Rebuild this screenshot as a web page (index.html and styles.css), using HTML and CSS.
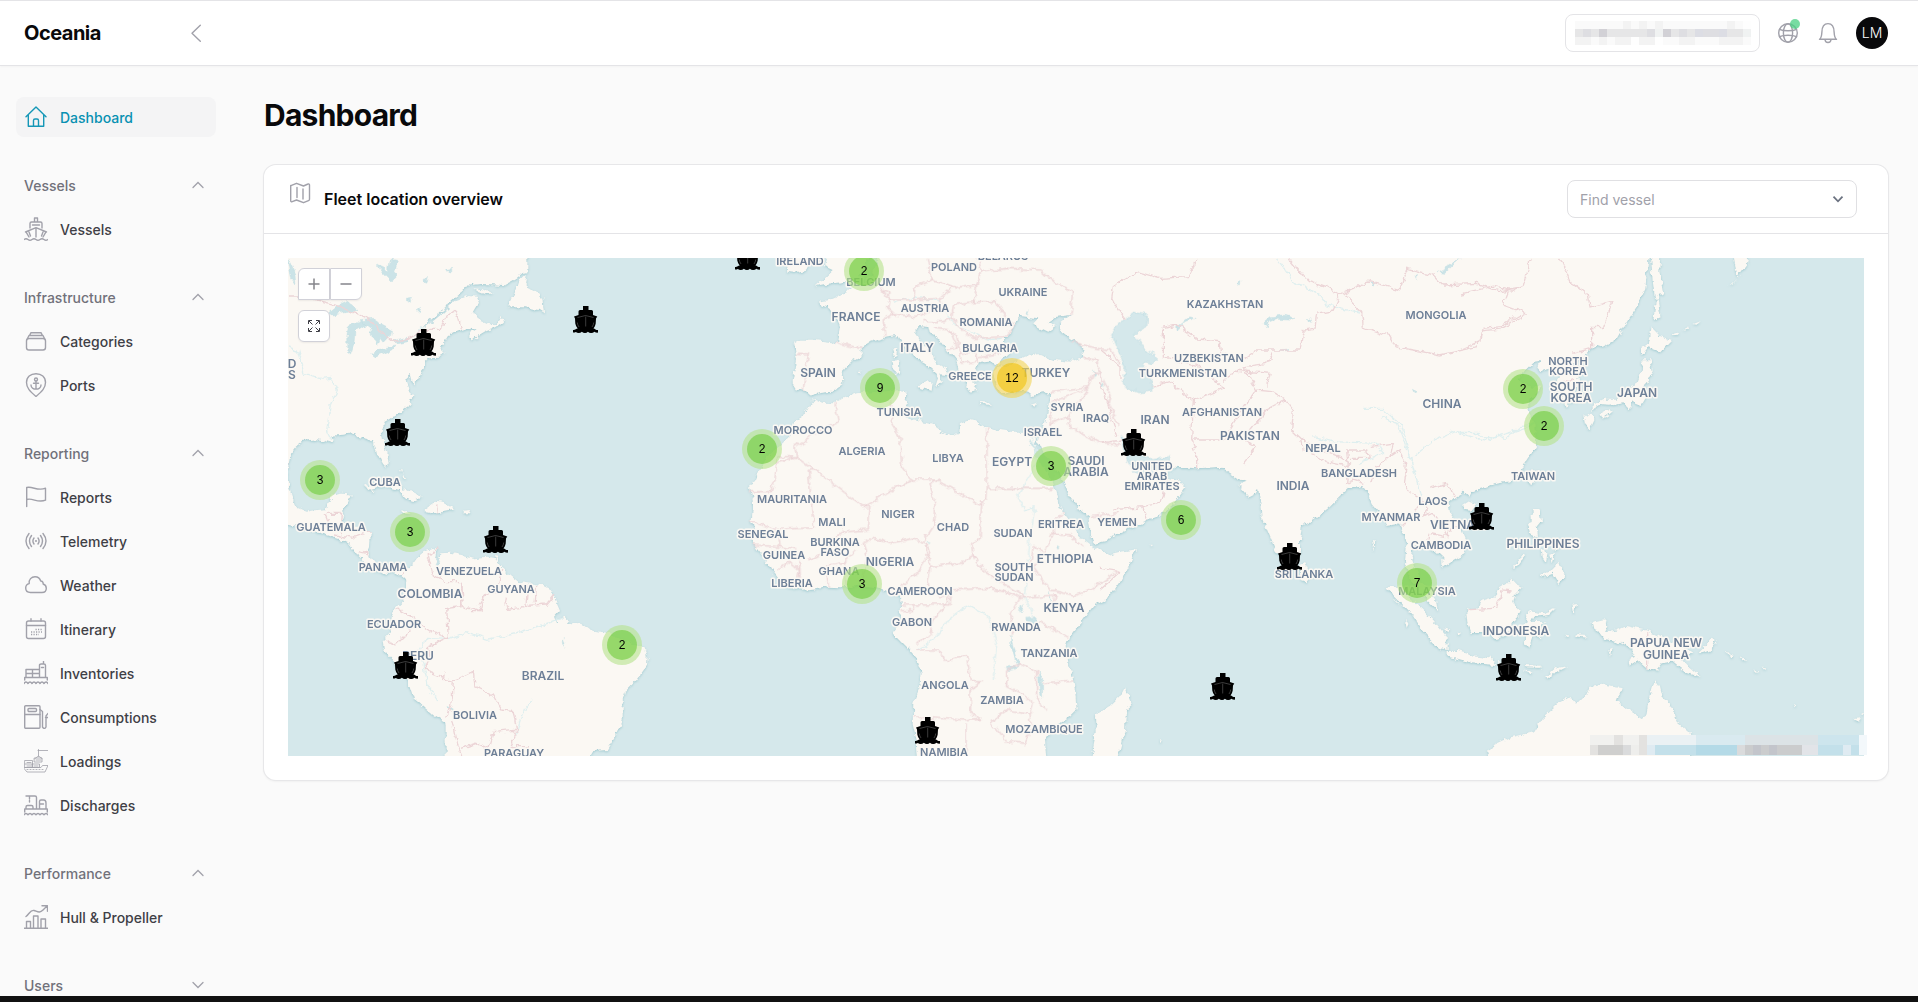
FILE: index.html
```html
<!DOCTYPE html>
<html lang="en">
<head>
<meta charset="utf-8">
<meta name="viewport" content="width=device-width, initial-scale=1">
<title>Dashboard - Oceania</title>
<link rel="stylesheet" href="styles.css">
</head>
<body>
<header class="topbar">
  <div class="brand">
    <a class="brand-name" href="#">Oceania</a>
    <button class="icon-button" type="button" aria-label="Collapse sidebar">
      <svg class="icon" viewBox="0 0 24 24"><path d="M16.300 4.200 8 12.300l8.300 8"/></svg>
    </button>
  </div>
  <div class="tools">
    <button class="tenant" type="button" aria-label="Select company">
      <svg class="tenant-mask" viewBox="0 0 22 3" preserveAspectRatio="none" shape-rendering="crispEdges">
        <path fill="#fafafa" d="M0 0h22v3H0z"/>
        <path fill="#f3f3f3" d="M6 0h1v1H6zM8 0h1v1H8zM10 0h1v1h-1zM19 0h1v1h-1zM0 2h2v1H0zM3 2h1v1H3zM5 2h2v1H5zM8 2h2v1H8zM13 2h2v1h-2zM18 2h3v1h-3z"/>
        <path fill="#fefefe" d="M7 2h1v1H7zM21 0h1v1h-1zM10 2h1v1h-1z"/>
        <path fill="#e6e6e7" d="M0 1h22v1H0z"/>
        <path fill="#dedee2" d="M1 1h1v1H1zM9 1h1v1H9zM13 1h1v1h-1zM16 1h2v1h-2z"/>
        <path fill="#d2d1d6" d="M3 1h1v1H3zM11 1h1v1h-1z"/>
        <path fill="#dcdde4" d="M15 1h1v1h-1zM18 1h1v1h-1z"/>
        <path fill="#f0f2f2" d="M10 1h1v1h-1zM21 1h1v1h-1z"/>
      </svg>
    </button>
    <button class="icon-button status" type="button" aria-label="Connection status">
      <svg class="icon" viewBox="0 0 24 24"><circle cx="12" cy="12" r="9.300"/><ellipse cx="12" cy="12" rx="4.600" ry="9.300"/><path d="M3.500 8.300c4 2 13 2 17 0M3.500 15.700c4-2 13-2 17 0"/></svg>
      <span class="status-dot"></span>
    </button>
    <button class="icon-button" type="button" aria-label="Notifications">
      <svg class="icon" viewBox="0 0 24 24"><path d="M3.500 18.300c1.700-1 2.200-3.800 2.400-7.300C6 6 8 2.600 12 2.600S18 6 18.100 11c.2 3.500.7 6.300 2.400 7.300zM9 18.500c.2 4 5.800 4 6 0"/></svg>
    </button>
    <button class="avatar" type="button">LM</button>
  </div>
</header>

<div class="shell">
  <nav class="sidebar" aria-label="Main">
    <a class="nav-item active" href="#">
      <svg class="icon" viewBox="0 0 24 24"><path d="M2 11.700 12 2l10 9.700M4.300 10v11.300h15.400V10M9.500 21v-5.500c0-1 .5-1.500 1.500-1.500h2c1 0 1.500.5 1.500 1.500V21"/></svg>
      <span>Dashboard</span>
    </a>
    <section class="nav-group">
      <button class="nav-heading" type="button"><span>Vessels</span><svg class="chevron" viewBox="0 0 12 12"><path d="m1 8.500 5-5 5 5"/></svg></button>
      <a class="nav-item" href="#">
        <svg class="icon" viewBox="0 0 24 24"><path d="M10.500 5V1h3v4M6 11V6.500Q6 5 7.500 5h9Q18 5 18 6.500V11M8.500 8h7M1.500 15 12 10.700 22.500 15M2 14.800 5 20M22 14.800 19 20M12 11v9M5 15l1.500 4M19 15l-1.500 4M0 22.500q2-1.500 4 0t4 0 4 0 4 0 4 0 4 0"/></svg>
        <span>Vessels</span>
      </a>
    </section>
    <section class="nav-group">
      <button class="nav-heading" type="button"><span>Infrastructure</span><svg class="chevron" viewBox="0 0 12 12"><path d="m1 8.500 5-5 5 5"/></svg></button>
      <a class="nav-item" href="#">
        <svg class="icon" viewBox="0 0 24 24"><rect x="2.500" y="9.500" width="19" height="11.500" rx="2.500"/><path d="M3.500 9.500 5 6.500h14l1.500 3M5.500 6.500 7 3.700h10l1.500 2.800"/></svg>
        <span>Categories</span>
      </a>
      <a class="nav-item" href="#">
        <svg class="icon" viewBox="0 0 24 24"><path d="M12 23.500C6 18.500 2.500 15 2.500 9.500 2.500 4 6.500.7 12 .7s9.500 3.300 9.500 8.800c0 5.500-3.500 9-9.500 14z"/><circle cx="12" cy="6.500" r="1.500"/><path d="M12 8v8M9.500 10.200h5M7 12c0 5.500 10 5.500 10 0"/></svg>
        <span>Ports</span>
      </a>
    </section>
    <section class="nav-group">
      <button class="nav-heading" type="button"><span>Reporting</span><svg class="chevron" viewBox="0 0 12 12"><path d="m1 8.500 5-5 5 5"/></svg></button>
      <a class="nav-item" href="#">
        <svg class="icon" viewBox="0 0 24 24"><path d="M2.700 21.500v-19c6-1.500 11 4 18.800.7v12c-8 3.200-12.800-2.700-18.800-.7"/></svg>
        <span>Reports</span>
      </a>
      <a class="nav-item" href="#">
        <svg class="icon" viewBox="0 0 24 24"><path d="M5 4.500q-6 7.500 0 15M7.500 6.500q-4 5.500 0 11M10 9q-2.200 3 0 6M19 4.500q6 7.500 0 15M16.500 6.500q4 5.500 0 11M14 9q2.200 3 0 6"/><circle cx="12" cy="12" r=".4"/></svg>
        <span>Telemetry</span>
      </a>
      <a class="nav-item" href="#">
        <svg class="icon" viewBox="0 0 24 24"><path d="M6.500 19.500C3.500 19.500 1.700 17.500 1.700 15c0-2.200 1.500-4 3.500-4.400C4.500 6.500 7.500 3.700 11 3.700c2.800 0 5 1.700 5.700 4.300 1.800.1 2.700 1.500 2.400 3 2 .6 3.200 2.200 3.200 4.200 0 2.500-1.800 4.300-4.300 4.300z"/></svg>
        <span>Weather</span>
      </a>
      <a class="nav-item" href="#">
        <svg class="icon" viewBox="0 0 24 24"><rect x="2.500" y="4" width="19" height="17.500" rx="2"/><path d="M7 4V1.700M17 4V1.700M2.500 8.500h19"/><path stroke-linecap="butt" stroke-dasharray="1.200 1.300" d="M11.500 12.500h6.500M7 15h11M7 17.500h8"/></svg>
        <span>Itinerary</span>
      </a>
      <a class="nav-item" href="#">
        <svg class="icon" viewBox="0 0 24 24"><path d="M.7 19v-2.500h22.600V19M2 16.500v-8h13.500v8M8.500 8.500v8M2 12.500h13.500M15.500 16V4Q15.500 3 17 3h3q1.500 0 1.500 1.500v12M19.500 3V0M17.500 6.500h2M0 22.500q2-3 4 0 2-3 4 0 2-3 4 0 2-3 4 0 2-3 4 0 2-3 4 0"/></svg>
        <span>Inventories</span>
      </a>
      <a class="nav-item" href="#">
        <svg class="icon" viewBox="0 0 24 24"><rect x=".7" y=".7" width="15.300" height="22.600" rx="1"/><rect x="4" y="3.500" width="8.500" height="3" rx="1"/><path d="M.7 9.500H16M16 4.500l2.500 2v15.500q2 3 3.500 0V11l2-2.500M21.500 12.500H24"/></svg>
        <span>Consumptions</span>
      </a>
      <a class="nav-item" href="#">
        <svg class="icon fine" viewBox="0 0 24 24"><path d="M24 1.500H14M14.500.5v7M11 9.500l3.500-2.500L18 9.500M10.500 9h7.500v4h-7.500zM12 11h5M1 11.500h7.500v7H1zM1 15h7.500M3 13.500h4M3 17h4M8.500 15h7v3.500h-7zM10 17h4M.5 18.500H17l1.500-2H24L21 23H3L.5 20z"/><path stroke-dasharray="1 2" d="M3 20.500h18"/></svg>
        <span>Loadings</span>
      </a>
      <a class="nav-item" href="#">
        <svg class="icon" viewBox="0 0 24 24"><path d="M.7 19v-3h22.600v3M2 16v-2q0-1.500 1.500-1.500h4Q9 12.500 9 14v2M12.500 16V4.500Q12.500 3 11 3H2M5.500 3v3M5.500 7.500V9M15.500 16V8.500q0-1.500 1.500-1.500h2.500Q22 7 22 10v6M15.500 11h4M0 21.700q2-2.500 4 0 2-2.500 4 0 2-2.500 4 0 2-2.500 4 0 2-2.500 4 0 2-2.500 4 0"/></svg>
        <span>Discharges</span>
      </a>
    </section>
    <section class="nav-group">
      <button class="nav-heading" type="button"><span>Performance</span><svg class="chevron" viewBox="0 0 12 12"><path d="m1 8.500 5-5 5 5"/></svg></button>
      <a class="nav-item" href="#">
        <svg class="icon" viewBox="0 0 24 24"><path d="M0 23.300h24M2.500 23v-6.500h4V23M9.500 23V11h4.500v12M17 23v-9h4.500v9M2 11.500c3-2 4.500-7 8-6s5.500 3 9-.5l4-4M18 .8h5.500v5.500"/></svg>
        <span>Hull &amp; Propeller</span>
      </a>
    </section>
    <section class="nav-group">
      <button class="nav-heading" type="button"><span>Users</span><svg class="chevron" viewBox="0 0 12 12"><path d="m1 3.500 5 5 5-5"/></svg></button>
    </section>
  </nav>

  <main class="content">
    <h1 class="page-title">Dashboard</h1>
    <section class="card">
      <div class="card-header">
        <svg class="icon card-icon" viewBox="0 0 24 24"><path d="M2.700 4.500v15.300c0 1 .8 1.200 1.500.9L8.500 19l7 2.700 5-2q1-.4 1-1.500V4c0-1-.7-1.400-1.500-1l-4.500 2-7-2.700-5 2q-.8.3-.8 1zM9 6.500v10M15 8v10"/></svg>
        <h2 class="card-title">Fleet location overview</h2>
        <div class="picker">
          <select class="picker-select" aria-label="Find vessel"><option>Find vessel</option></select>
          <svg class="picker-arrow" viewBox="0 0 12 12"><path d="m1.500 3.700 4.500 4.600 4.500-4.600"/></svg>
        </div>
      </div>
      <div class="card-body">
        <div class="map">
          <svg class="map-canvas" viewBox="288 258 1576 498" preserveAspectRatio="xMidYMid slice" role="img" aria-label="Fleet locations on a world map">
            <defs>
              <filter id="coast" filterUnits="userSpaceOnUse" x="280" y="250" width="1592" height="514">
                <feTurbulence type="fractalNoise" baseFrequency=".13" numOctaves="3" seed="4" result="n"/>
                <feDisplacementMap in="SourceGraphic" in2="n" scale="7" xChannelSelector="R" yChannelSelector="G" result="d"/>
                <feDropShadow in="d" dx="0" dy="1" stdDeviation="1.300" flood-color="#9cc8cf" flood-opacity=".9"/>
              </filter>
              <filter id="rough" filterUnits="userSpaceOnUse" x="280" y="250" width="1592" height="514">
                <feTurbulence type="fractalNoise" baseFrequency=".13" numOctaves="3" seed="4" result="n"/>
                <feDisplacementMap in="SourceGraphic" in2="n" scale="7" xChannelSelector="R" yChannelSelector="G"/>
              </filter>
              <symbol id="ship" viewBox="0 0 25 27">
                <path d="M10 0h5.500v4h3q1.500 0 1.500 1.500V9l4.300 1.500-1.300 2-.3 5q-.3 2.500-2.200 5 1.200.3 2 .9 1.200.8 2.500.6v2.600q-2 .2-3.600-.9-1.700 1.400-3.500 1.200-1.600 0-3-1.200-1.200 1.300-3 1.200-1.700 0-3-1.200-1.400 1.200-3.200 1.200-1.700 0-2.800-1-1.200.8-2.900.7V24q1.500.2 2.700-.8.800-.6 2-.7-2-2.300-2.400-5l-.3-5-1-2L5.500 9V5.500Q5.500 4 7 4h3z"/>
                <path d="M12.700 10.500v10M4.500 11.500l8-2 8 2M6 21q-1.500-2-1.700-4.500M19 21q1.500-2 1.700-4.500" fill="none" stroke="#777" stroke-width=".5"/>
              </symbol>
            </defs>
            <rect class="sea" x="288" y="258" width="1576" height="498"/>

            <g class="land" filter="url(#coast)">
              <!-- The Americas -->
              <g transform="translate(280 250) scale(.333333)">
                <path d="M0 0H742V70L725 72 700 92 675 106 640 103 600 102 560 107 545 125 525 140 505 158 490 180 470 195 445 215 430 234 455 217 485 193 510 168 530 150 560 138 590 140 597 155 585 175 575 192 590 195 600 212 630 226 645 225 665 198 672 215 645 235 620 243 600 255 580 272 567 262 575 247 590 238 560 235 545 240 520 250 500 262 490 280 483 295 494 310 475 320 445 322 432 335 432 355 415 375 410 395 400 405 392 375 378 388 385 405 390 425 398 435 388 445 395 462 375 475 350 495 330 508 312 518 305 545 310 575 322 610 326 640 318 655 305 640 290 610 285 585 265 568 240 562 215 552 190 557 150 560 165 570 155 578 135 572 110 568 75 572 50 590 30 615 26 645 22 680 26 705 35 735 55 775 80 785 110 780 140 778 150 755 155 735 180 728 212 730 205 755 190 775 190 800 185 815 215 820 255 840 272 850 270 890 265 915 285 940 310 955 340 948 375 960 400 940 420 912 450 900 475 890 465 910 462 925 485 910 510 908 545 915 580 925 620 920 645 925 665 955 690 975 715 995 745 1000 785 1005 810 1018 825 1045 840 1080 822 1100 832 1125 860 1125 900 1118 930 1140 960 1145 985 1150 1060 1185 1090 1190 1100 1215 1098 1250 1070 1290 1035 1325 1028 1350 1028 1410 1010 1450 980 1500 940 1503 915 1545H497V1430L495 1415 460 1395 400 1345 385 1300 345 1235 312 1200 308 1175 330 1150 335 1130 335 1100 345 1075 370 1050 378 1010 375 990 350 968 330 962 320 975 300 965 265 950 235 920 228 908 205 880 180 868 150 858 110 845 60 832 0 820Z"/>
                <path d="M740 75 735 105 745 110 770 125 790 145 795 190 780 180 765 178 740 172 715 172 685 172 695 150 710 115 720 85ZM580 115 610 118 640 132 620 135 595 125ZM255 710 280 700 320 690 355 705 385 722 425 742 400 753 375 745 360 720 320 710 290 712 262 720ZM430 782 470 755 495 760 528 778 490 785 470 790ZM360 782 385 780 395 788 370 792ZM550 782 573 780 570 790 552 790ZM832 1110 848 1102 868 1112 855 1130 835 1128ZM360 660 366 662 364 672ZM370 672 378 690 372 690ZM270 718 285 720 278 724ZM645 918 655 920 650 935Z"/>
              </g>
              <!-- Europe, the Middle East and Africa -->
              <g transform="translate(700 250) scale(.333333)">
                <path d="M545 0 520 60 500 98 455 108 440 125 405 142 385 150 357 155 365 170 390 175 412 205 422 235 415 272 395 280 340 272 300 272 280 285 288 330 283 365 278 395 290 415 315 420 335 440 355 430 395 425 430 400 428 365 450 335 488 315 488 290 505 278 530 270 560 262 595 258 607 278 625 300 650 325 675 338 700 360 714 385 705 412 722 395 722 373 745 375 738 355 700 330 690 305 665 275 645 245 655 225 685 228 690 250 720 270 750 310 770 335 778 370 795 400 810 425 832 420 815 398 845 385 822 350 840 338 870 335 895 345 905 330 925 312 912 290 912 265 930 245 945 220 960 198 985 202 1015 205 998 222 1045 245 1070 227 1040 215 1060 202 1112 195 1080 220 1078 240 1110 265 1145 285 1150 325 1115 335 1060 330 1020 312 985 318 955 330 925 345 895 350 880 365 885 400 900 425 930 432 960 422 985 425 1000 437 1050 425 1050 455 1040 500 1028 545 1022 575 1032 620 1060 650 1090 690 1110 740 1140 780 1165 800 1172 850 1180 880 1220 870 1260 850 1320 820 1320 0ZM745 0"/>
                <path d="M1012 570 985 545 935 545 900 540 860 532 830 515 805 508 780 520 778 550 755 558 720 540 700 525 660 515 635 510 605 490 622 460 612 445 620 425 600 420 540 425 470 430 430 445 400 460 370 458 345 447 325 470 310 495 278 520 270 560 240 590 200 620 185 655 165 680 150 715 160 760 155 810 162 840 150 855 160 880 180 905 200 930 215 960 240 990 270 1010 310 1022 350 1018 380 1010 430 1012 480 1008 530 1015 555 1022 575 1030 600 1040 603 1070 600 1120 580 1150 620 1190 650 1225 665 1270 660 1310 640 1360 638 1420 650 1470 655 1545H1040L1035 1470 1060 1430 1110 1400 1130 1380 1125 1320 1118 1280 1105 1240 1100 1190 1115 1150 1150 1110 1190 1060 1230 1040 1265 990 1295 930 1308 898 1260 905 1220 915 1195 900 1170 885 1150 870 1120 830 1090 790 1075 760 1060 700 1030 645 1000 595Z"/>
                <path d="M1012 570 1035 540 1045 560 1030 610ZM250 0 262 65 285 68 320 58 335 0ZM385 0 372 48 398 60 375 82 345 108 375 102 440 95 478 80 500 50 505 0ZM580 300 595 295 592 318 585 322ZM578 335 598 333 597 370 582 375ZM650 402 695 395 692 422 665 415ZM838 456 870 458 872 464 840 462ZM988 465 1012 457 1003 470ZM800 398 830 402 825 412ZM478 362 488 362 484 368Z"/>
              </g>
              <!-- Asia -->
              <g transform="translate(1100 250) scale(.333333)">
                <path d="M90 0V640L60 840 120 820 180 795 215 770 235 740 257 710 240 692 200 680 212 640 225 650 290 655 370 650 380 665 410 685 440 695 415 705 445 740 465 730 475 715 480 750 485 800 510 860 530 910 560 955 580 945 600 910 600 870 605 830 640 810 690 770 720 740 745 715 790 705 800 720 815 760 840 790 860 825 895 820 910 845 920 890 915 940 930 985 955 1010 975 1045 1000 1070 1012 1077 1008 1050 985 1020 960 990 945 955 935 925 940 890 955 880 985 890 1010 905 1030 925 1030 950 1060 930 1095 910 1098 870 1080 830 1050 790 1045 760 1065 740 1090 725 1105 740 1115 720 1150 715 1200 695 1235 680V0Z"/>
                <path d="M862 1010 890 1012 930 1045 965 1075 1000 1110 1040 1160 1040 1200 1010 1190 965 1140 930 1085 880 1035ZM1040 1203 1075 1203 1110 1215 1170 1222 1188 1245 1120 1240 1040 1218ZM598 945 615 938 632 975 620 997 602 990ZM75 1312 95 1365 78 1380 75 1440 50 1545H-30L-10 1440-12 1395 30 1370 60 1340ZM885 1050 895 1055 900 1065ZM915 1110 925 1120 920 1130ZM148 884 160 885 152 889ZM1030 1135 1050 1140 1045 1150ZM1072 1148 1082 1150 1076 1156ZM1192 1233 1205 1235 1200 1245ZM180 1467 188 1470 184 1476ZM816 870 824 872 820 905Z"/>
              </g>
              <!-- East Asia and Oceania -->
              <g transform="translate(1460 250) scale(.333333 .344353)">
                <path d="M0 0H568L556 110 530 165 500 210 470 260 430 282 410 275 385 295 362 315 335 335 350 360 355 385 345 400 352 430 320 455 308 430 300 400 290 375 305 362 270 345 242 352 232 342 240 322 220 325 190 355 175 375 205 395 245 400 222 425 200 440 205 470 230 510 228 570 195 620 180 650 150 672 95 680 40 700 0 698Z"/>
                <path d="M572 0 602 0 598 60 614 128 590 130 602 195 580 205 587 150 578 90ZM575 225 600 250 635 262 600 298 565 285 547 308 545 285 567 270ZM550 320 572 320 578 350 560 380 550 400 560 425 545 450 520 440 510 460 490 445 450 452 420 450 395 465 402 448 430 435 470 435 500 400 530 390 545 350ZM370 480 395 470 405 490 390 522 375 505ZM418 475 445 462 452 472 425 490ZM818 0 832 80 858 45 864 0ZM215 640 234 640 228 670 215 688 205 665ZM10 740 30 728 48 735 30 757 12 755ZM215 755 238 755 243 785 230 800 234 832 210 822 203 795 215 790ZM238 945 275 930 300 905 315 945 295 970 275 940 245 952ZM158 925 192 882 196 888 165 925ZM245 870 262 880 258 910 248 895ZM268 885 285 880 275 910ZM282 850 295 862 285 872ZM18 1040 22 1080 35 1112 80 1112 110 1130 145 1115 165 1075 182 1050 160 1025 165 1000 188 978 170 970 155 955 140 970 115 985 95 1010 60 1020 50 1045ZM202 1060 215 1050 250 1055 290 1040 270 1060 220 1065 212 1080 260 1080 227 1098 245 1125 220 1118 205 1158 195 1145 195 1090ZM395 1080 430 1072 445 1090 435 1110 470 1105 500 1092 560 1105 640 1140 680 1160 700 1165 665 1190 690 1215 722 1240 680 1228 640 1195 605 1200 590 1218 560 1215 530 1190 510 1203 505 1190 525 1180 515 1160 470 1135 430 1130 415 1110 400 1100ZM718 1168 755 1132 767 1135 755 1160 725 1172ZM795 1158 815 1178 808 1180ZM840 1180 858 1192 850 1194ZM880 1218 900 1225 890 1228ZM905 1205 918 1220 912 1222ZM80 1468 100 1440 155 1415 220 1400 245 1360 290 1320 330 1298 350 1320 370 1300 385 1270 430 1262 485 1270 470 1310 500 1335 545 1362 562 1350 570 1300 585 1248 600 1270 608 1300 630 1320 650 1370 690 1405 700 1500 80 1500ZM255 1240 285 1215 322 1208 290 1225 262 1244ZM190 1205 240 1207 238 1213 195 1212ZM188 1225 215 1228 205 1236ZM308 1120 325 1122 318 1128ZM340 1115 382 1118 378 1125 345 1122ZM335 1030 348 1028 340 1058ZM445 1162 455 1158 450 1178ZM1180 1362 1200 1360 1192 1370ZM1205 1345 1215 1340 1210 1352ZM640 245 660 238 650 250ZM670 232 690 222 680 235ZM700 215 722 207 710 217ZM805 105 825 88 815 100ZM1000 1318 1008 1322 1003 1328Z"/>
              </g>
            </g>

            <g class="lakes" filter="url(#rough)">
              <g transform="translate(280 250) scale(.333333)">
                <path d="M140 190 170 165 200 152 235 180 218 185 190 190 160 195ZM205 225 245 215 255 225 225 245 222 280 212 315 200 305 200 265ZM240 212 280 208 305 225 335 240 330 265 310 275 300 262 290 285 280 270 275 240 255 225ZM275 310 300 295 345 288 335 300 290 320ZM335 272 380 262 385 275 345 282ZM24 25 45 70 48 105 34 85ZM292 45 325 60 330 30 352 35 345 65 355 75 335 95 310 70ZM430 95 445 78 440 100ZM468 915 482 935 475 952 465 935ZM378 148 398 145 392 155ZM500 58 516 55 505 66ZM410 180 422 172 415 185ZM500 1370 520 1380 512 1385ZM850 1165 857 1192 850 1185Z"/>
              </g>
              <g transform="translate(700 250) scale(.333333)">
                <path d="M985 570 1030 612 1062 650 1060 690 1020 635ZM980 1105 1012 1100 1010 1122 985 1125ZM932 1160 945 1210 960 1245 950 1240 932 1190ZM1015 1265 1028 1290 1028 1345 1018 1320ZM918 1250 958 1248 950 1256 925 1262ZM955 1085 970 1060 962 1085ZM1205 395 1215 410 1208 415ZM1180 360 1188 375 1182 380ZM980 195 985 180 978 188ZM1048 1025 1055 1055 1050 1045ZM1070 890 1078 893 1072 900ZM680 874 688 876 682 880Z"/>
              </g>
              <g class="inland-seas" transform="translate(1100 250) scale(.333333)">
                <path d="M70 210 105 188 142 195 140 230 130 235 95 255 118 275 132 300 160 312 170 330 155 340 135 335 130 345 155 385 155 422 120 428 80 415 70 400 75 350 65 325 35 250 50 225ZM60 560 72 565 98 600 128 615 160 630 208 620 210 640 225 655 215 670 190 655 150 670 125 680 100 660 80 625Z"/>
              </g>
              <g transform="translate(1100 250) scale(.333333)">
                <path d="M490 220 512 200 550 195 585 205 570 208 530 205 505 215 498 237ZM1008 68 1045 48 1082 26 1060 45 1035 70ZM625 205 635 210 630 218ZM536 300 570 295 555 303ZM940 418 955 425 945 428ZM810 98 825 100 815 110ZM408 100 420 95 418 105ZM230 230 270 200 285 205 245 220 232 245ZM945 75 952 75 950 95Z"/>
              </g>
            </g>

            <g class="rivers" filter="url(#rough)">
              <path transform="translate(280 250) scale(.333333)" d="M24 290 55 300 75 370 120 385 155 382 172 420 150 470 140 540 155 570M845 1105 800 1120 740 1140 660 1160 620 1168 560 1148 500 1168 440 1165 420 1200 440 1300 470 1350M755 1350 730 1380 710 1450M430 232 400 260"/>
              <path transform="translate(700 250) scale(.333333)" d="M655 1200 700 1170 745 1110 800 1065 860 1095 890 1180 880 1290M995 560 1005 600 1010 640 955 740 975 780 1005 770 990 860 985 930 980 1000 975 1040 1000 1100M580 160 640 140 720 155 760 220 860 270 905 265"/>
              <path transform="translate(1100 250) scale(.333333)" d="M530 24 580 95 655 130 680 165 780 190M790 475 850 475 900 520 925 600 950 690 965 750M640 560 700 575 830 580 850 610 780 640M840 500 890 520 920 600M930 630 1000 570 1060 545 1150 570 1240 545 1310 520"/>
              <path transform="translate(1460 250) scale(.333333 .344353)" d="M0 530 60 530 85 555 115 535 135 550 180 510 225 505"/>
            </g>

            <g class="borders" filter="url(#rough)">
              <path transform="translate(280 250) scale(.333333)" d="M24 138H60L130 155 170 165 260 205 300 240 340 275 385 265 430 238 480 238 515 180 530 185 545 238M24 640 30 645M140 790H185M135 790 145 815 165 835 185 850M185 790 180 835M165 855 215 865 270 845M235 905 265 912M375 960 365 975M475 890 445 920 460 975 495 995 545 995 545 1070 500 1075 505 1165 490 1165 480 1150 455 1145 400 1105 350 1075M320 1170 345 1185 390 1140 410 1115M500 1165 445 1190 450 1220 435 1250 450 1270 490 1285 495 1265M495 1285 520 1290 515 1370 500 1400M520 1290 550 1280 580 1265 585 1310 640 1335 665 1380 700 1385 710 1445M545 995 550 1070 600 1085 595 1060 610 1035 650 1025 665 960M610 1035 600 1085 570 1085M680 1035 675 1065 690 1078 730 1070 800 1065 825 1035M740 1005 735 1070M770 1005 765 1060M515 1410 530 1480 545 1518M545 1495 590 1480 625 1495 640 1445 700 1438 710 1450 690 1490 745 1490M470 765 472 790"/>
              <path transform="translate(700 250) scale(.333333)" d="M405 275 445 288 488 295M290 310 325 312 320 350 312 400 310 420M510 60 545 120 570 130 560 170 580 190 550 210 555 260M545 120 570 150 640 150 645 110 700 88 760 110 720 145 640 150M580 190 640 200 680 190 725 165 720 145M685 24 695 85 770 115 830 105 845 65 835 24M845 65 920 55 1020 60 1060 95 1118 125 1110 195M830 105 820 155 760 165 755 205 730 215 670 215M755 205 790 245 820 265 910 260 945 225 910 195 890 155 820 155M705 235 750 240 770 290 745 300M750 240 770 260 780 310 825 305 835 340M780 310 785 340 830 330M905 310 835 320M1115 275 1190 295 1230 300 1260 340M1150 325 1190 330 1200 370 1180 370 1165 410 1050 425M1200 370 1230 430 1225 460 1260 530M1055 455 1100 440 1165 415M1055 470 1050 520 1105 500 1165 415M1105 500 1110 530 1200 580 1260 585M405 462 415 515 345 550 285 590 290 620 230 640 230 620H290M230 640 225 690 210 725 150 725M290 620 490 770 635 690 605 650 600 560 575 520 570 440M325 660H350M325 660 340 830 240 835 235 840M490 770 510 770 505 840 440 845 400 860 380 900 325 930M860 532 862 715 860 750 845 750 845 765 708 690 635 690M862 715H1060M708 690 690 700 705 760 700 830 670 875M845 765 840 865 815 880 820 930M500 930 490 880 520 865 570 880 640 865 675 880 690 905 650 970 620 1000 585 1020M500 930 480 1005M150 810 200 830 235 840 240 890 160 885M240 890 290 900 300 950 290 1005M235 960 270 935 300 960 300 1015M385 1010 380 950 430 940 440 1010M430 940 470 900M675 880 690 950 680 1000 720 1040 750 1035M690 950 780 940 820 915 850 960 925 1010 975 1040M600 1065H750L755 1020 870 1015 930 1030 960 1045M605 1082H640V1062M655 1180 690 1150 700 1110 740 1060 750 1020M650 1200H720L735 1230 800 1220 815 1295 845 1295 810 1320 812 1390 840 1405 790 1410 640 1400M795 1420V1518M870 1415 920 1380 990 1390 1000 1360 960 1330 920 1310 920 1260 960 1240 1010 1265 1010 1340 1040 1385M870 1415 920 1475 975 1480 995 1440 990 1390M935 1160 930 1095 960 1045 1000 1040 1065 1035 1060 1060M1020 1115 1105 1165M1030 1300 1120 1290M1060 850 1035 910 1000 950 1050 1020 1120 1035 1170 1020 1260 960M1060 850 1110 855 1150 890M1035 910 1000 890 990 950M1090 790 1060 820 1060 850M1170 800 1260 790"/>
              <path transform="translate(1100 250) scale(.333333)" d="M75 205 35 150 40 110 110 65 180 85 265 80 290 24M190 320V235L230 225 295 270 360 275 365 310 430 330 470 300 600 300 610 240 645 235 650 190 700 180 720 135 680 110 620 90 565 24M720 135 740 125 810 95 900 120 920 55 1000 75 1030 105 1130 100 1200 125 1260 115M735 135 785 190 790 230 870 260 885 290 1020 315 1130 290 1150 235 1200 230 1260 195M155 410 210 395 280 450 370 415 290 345 190 320M280 450 275 570 290 610 290 655M275 570 370 570 420 490 470 420 515 425 555 450 580 480 575 540 620 580 720 620 750 640M470 420 430 350 500 340 520 310M370 400 400 360 510 370 500 410M430 640 470 590 430 570 500 480 555 450M605 570 610 600 680 635 745 650 740 600 800 600 805 625 750 625M745 650 740 700 760 690 790 700M810 590 880 580 870 620 830 650 815 700M870 620 900 600 920 640 910 700 930 730 965 750 940 790 905 830M965 750 985 780 970 800 1000 790 1030 830 1040 860 990 850 985 880M985 715 1040 700 1065 740M1040 860 1060 830 1080 830M0 580 60 570M0 300 60 350 60 390M0 390 20 450 50 560M40 780 125 770 145 810M125 770 180 760 190 720M0 955 60 965 0 1020"/>
              <path transform="translate(1460 250) scale(.333333 .344353)" d="M0 128 100 105 160 120 190 105 205 60 210 23M145 120 130 160 200 185 120 230 65 235 60 265 0 290M300 23 330 90 385 130 390 165 455 150 430 225 395 225 395 285 340 300M315 385 345 375M560 1110V1215M22 1045 110 1040 125 990 158 993"/>
            </g>

            <g class="labels">
              <text x="292" y="368" class="lg">D</text><text x="292" y="379" class="lg">S</text>
              <text x="385" y="486">CUBA</text><text x="331" y="531">GUATEMALA</text><text x="383" y="571">PANAMA</text><text x="469" y="575">VENEZUELA</text><text x="511" y="593">GUYANA</text><text x="430" y="598" class="lg">COLOMBIA</text><text x="394" y="628">ECUADOR</text><text x="418" y="660" class="lg">PERU</text><text x="543" y="680" class="lg">BRAZIL</text><text x="475" y="719">BOLIVIA</text><text x="514" y="757">PARAGUAY</text>
              <text x="800" y="265">IRELAND</text><text x="871" y="286">BELGIUM</text><text x="954" y="271">POLAND</text><text x="1003" y="260">BELARUS</text><text x="1023" y="296">UKRAINE</text><text x="856" y="321" class="lg">FRANCE</text><text x="925" y="312">AUSTRIA</text><text x="986" y="326">ROMANIA</text><text x="917" y="352" class="lg">ITALY</text><text x="990" y="352">BULGARIA</text><text x="818" y="377" class="lg">SPAIN</text><text x="970" y="380">GREECE</text><text x="1046" y="377" class="lg">TURKEY</text><text x="899" y="416">TUNISIA</text><text x="1067" y="411">SYRIA</text><text x="1096" y="422">IRAQ</text><text x="1043" y="436">ISRAEL</text><text x="803" y="434">MOROCCO</text><text x="862" y="455">ALGERIA</text><text x="948" y="462">LIBYA</text><text x="1012" y="466" class="lg">EGYPT</text>
              <text x="1086" y="465" class="lg">SAUDI</text><text x="1086" y="476" class="lg">ARABIA</text><text x="792" y="503">MAURITANIA</text><text x="898" y="518">NIGER</text><text x="832" y="526">MALI</text><text x="953" y="531">CHAD</text><text x="1013" y="537">SUDAN</text><text x="1061" y="528">ERITREA</text><text x="1117" y="526">YEMEN</text><text x="763" y="538">SENEGAL</text><text x="835" y="546">BURKINA</text><text x="835" y="556">FASO</text><text x="784" y="559">GUINEA</text><text x="890" y="566" class="lg">NIGERIA</text><text x="839" y="575">GHANA</text><text x="792" y="587">LIBERIA</text><text x="920" y="595">CAMEROON</text><text x="1065" y="563" class="lg">ETHIOPIA</text><text x="1014" y="571">SOUTH</text><text x="1014" y="581">SUDAN</text><text x="1064" y="612" class="lg">KENYA</text><text x="912" y="626">GABON</text><text x="1016" y="631">RWANDA</text><text x="1049" y="657">TANZANIA</text><text x="945" y="689">ANGOLA</text><text x="1002" y="704">ZAMBIA</text><text x="1044" y="733">MOZAMBIQUE</text><text x="944" y="756">NAMIBIA</text>
              <text x="1225" y="308">KAZAKHSTAN</text><text x="1436" y="319">MONGOLIA</text><text x="1209" y="362">UZBEKISTAN</text><text x="1183" y="377">TURKMENISTAN</text><text x="1222" y="416">AFGHANISTAN</text><text x="1155" y="424" class="lg">IRAN</text><text x="1250" y="440" class="lg">PAKISTAN</text><text x="1323" y="452">NEPAL</text><text x="1442" y="408" class="lg">CHINA</text><text x="1359" y="477">BANGLADESH</text><text x="1293" y="490" class="lg">INDIA</text><text x="1152" y="470">UNITED</text><text x="1152" y="480">ARAB</text><text x="1152" y="490">EMIRATES</text><text x="1433" y="505">LAOS</text><text x="1391" y="521">MYANMAR</text><text x="1458" y="529" class="lg">VIETNAM</text><text x="1441" y="549">CAMBODIA</text><text x="1304" y="578">SRI LANKA</text><text x="1427" y="595">MALAYSIA</text><text x="1516" y="635" class="lg">INDONESIA</text>
              <text x="1568" y="365">NORTH</text><text x="1568" y="375">KOREA</text><text x="1571" y="391" class="lg">SOUTH</text><text x="1571" y="402" class="lg">KOREA</text><text x="1637" y="397" class="lg">JAPAN</text><text x="1533" y="480">TAIWAN</text><text x="1543" y="548" class="lg">PHILIPPINES</text><text x="1666" y="647" class="lg">PAPUA NEW</text><text x="1666" y="659" class="lg">GUINEA</text>
            </g>

            <g class="ships">
              <use href="#ship" x="573" y="306" width="25" height="27"/><use href="#ship" x="411" y="329" width="25" height="27"/><use href="#ship" x="385" y="419" width="25" height="27"/><use href="#ship" x="483" y="526" width="25" height="27"/><use href="#ship" x="393" y="652" width="25" height="27"/><use href="#ship" x="735" y="243" width="25" height="27"/><use href="#ship" x="915" y="717" width="25" height="27"/><use href="#ship" x="1121" y="429" width="25" height="27"/><use href="#ship" x="1277" y="543" width="25" height="27"/><use href="#ship" x="1469" y="503" width="25" height="27"/><use href="#ship" x="1210" y="673" width="25" height="27"/><use href="#ship" x="1496" y="654" width="25" height="27"/>
            </g>

            <g class="clusters">
              <g transform="translate(320 480)"><circle r="20"/><circle r="15"/><text y="4">3</text></g>
              <g transform="translate(410 532)"><circle r="20"/><circle r="15"/><text y="4">3</text></g>
              <g transform="translate(622 645)"><circle r="20"/><circle r="15"/><text y="4">2</text></g>
              <g transform="translate(864 271)"><circle r="20"/><circle r="15"/><text y="4">2</text></g>
              <g transform="translate(880 388)"><circle r="20"/><circle r="15"/><text y="4">9</text></g>
              <g transform="translate(762 449)"><circle r="20"/><circle r="15"/><text y="4">2</text></g>
              <g class="medium" transform="translate(1012 378)"><circle r="20"/><circle r="15"/><text y="4">12</text></g>
              <g transform="translate(1051 466)"><circle r="20"/><circle r="15"/><text y="4">3</text></g>
              <g transform="translate(862 584)"><circle r="20"/><circle r="15"/><text y="4">3</text></g>
              <g transform="translate(1181 520)"><circle r="20"/><circle r="15"/><text y="4">6</text></g>
              <g transform="translate(1417 583)"><circle r="20"/><circle r="15"/><text y="4">7</text></g>
              <g transform="translate(1523 389)"><circle r="20"/><circle r="15"/><text y="4">2</text></g>
              <g transform="translate(1544 426)"><circle r="20"/><circle r="15"/><text y="4">2</text></g>
            </g>
          </svg>
          <div class="map-zoom">
            <button class="map-button" type="button" aria-label="Zoom in"><svg viewBox="0 0 12 12"><path d="M6 .5v11M.5 6h11"/></svg></button>
            <button class="map-button" type="button" aria-label="Zoom out"><svg viewBox="0 0 12 12"><path d="M.5 6h11"/></svg></button>
          </div>
          <button class="map-button map-full" type="button" aria-label="Full screen"><svg viewBox="0 0 12 12"><path d="M.5 4V.5H4M8 .5h3.500V4M11.500 8v3.500H8M4 11.500H.5V8M1 1l3.500 3.500M11 1 7.500 4.500M11 11 7.500 7.500M1 11l3.500-3.500"/></svg></button>
          <svg class="attribution" viewBox="0 0 34 2" preserveAspectRatio="none" shape-rendering="crispEdges" aria-hidden="true">
            <path fill="#f1f1ef" d="M0 0h7v1H0z"/><path fill="#eaf1f4" d="M7 0h6v1H7z"/><path fill="#d9eaf0" d="M13 0h6v1h-6z"/><path fill="#dce3e6" d="M19 0h9v1h-9z"/><path fill="#cde5ed" d="M28 0h5v1h-5z"/>
            <path fill="#e3e2e0" d="M3 0h1v1H3zM6 0h1v2H6zM0 1h1v1H0z"/><path fill="#cfcfce" d="M1 1h3v1H1z"/><path fill="#dadbdc" d="M4 1h1v1H4zM18 1h1v1h-1z"/><path fill="#eeeeec" d="M5 1h1v1H5z"/><path fill="#dfebf2" d="M7 1h1v1H7zM31 1h1v1h-1z"/><path fill="#c3e0ea" d="M8 1h5v1H8zM28 1h3v1h-3zM32 1h1v1h-1z"/><path fill="#b4dae7" d="M13 1h5v1h-5z"/><path fill="#cbcccd" d="M19 1h7v1h-7z"/><path fill="#c3c5cb" d="M20 1h1v1h-1zM22 1h1v1h-1z"/><path fill="#e2e4e8" d="M26 1h2v1h-2z"/><path fill="#f3f8fb" d="M33 0h1v2h-1z"/>
          </svg>
        </div>
      </div>
    </section>
  </main>
</div>
<div class="bottom-strip"></div>
</body>
</html>
```
FILE: styles.css
```css
* { box-sizing: border-box; }

body {
  margin: 0;
  height: 100vh;
  display: flex;
  flex-direction: column;
  overflow: hidden;
  background: #fafafa;
  color: #09090b;
  font-family: Inter, "Liberation Sans", sans-serif;
  font-size: 14px;
  line-height: 24px;
}

button, select { font: inherit; color: inherit; }
button { border: 0; padding: 0; background: none; cursor: pointer; }
a { color: inherit; text-decoration: none; }

.icon {
  width: 24px;
  height: 24px;
  flex: none;
  display: block;
  fill: none;
  stroke: #a1a1aa;
  stroke-width: 1.4;
  stroke-linecap: round;
  stroke-linejoin: round;
}
.icon.fine { stroke-width: 0.8; }

/* Top bar */
.topbar {
  position: relative;
  flex: none;
  height: 65px;
  display: flex;
  align-items: center;
  justify-content: space-between;
  padding: 0 30px 0 24px;
  background: #fff;
  border-top: 1px solid #e4e4e7;
  box-shadow: 0 1px 0 #e4e4e7, 0 2px 2px rgba(0, 0, 0, 0.03);
}
.brand {
  width: 184px;
  display: flex;
  align-items: center;
  justify-content: space-between;
}
.brand-name { font-size: 20px; font-weight: 700; letter-spacing: -0.025em; }
.icon-button { position: relative; display: block; }
.tools { display: flex; align-items: center; gap: 16px; }
.tenant {
  width: 195px;
  height: 38px;
  padding: 0 8px 0 9px;
  border: 1px solid #e4e4e7;
  border-radius: 8px;
  background: #fff;
}
.tenant-mask { display: block; width: 100%; height: 24px; }
.status-dot {
  position: absolute;
  top: -2px;
  right: 0;
  width: 10px;
  height: 10px;
  border-radius: 50%;
  background: #4ad083;
  opacity: 0.75;
}
.avatar {
  width: 32px;
  height: 32px;
  border-radius: 50%;
  background: #09090b;
  color: #fff;
  font-weight: 300;
}

/* Layout */
.shell { flex: 1; min-height: 0; display: flex; overflow: hidden; }
.sidebar {
  flex: none;
  width: 232px;
  padding: 32px 16px 0;
  overflow: hidden;
}
.content { flex: 1; min-width: 0; padding: 32px 30px 0 32px; overflow: hidden; }
.bottom-strip { position: relative; flex: none; height: 6px; background: #111; }

/* Navigation */
.nav-group {
  margin-top: 28px;
  display: flex;
  flex-direction: column;
  gap: 4px;
}
.nav-heading {
  width: 100%;
  height: 40px;
  display: flex;
  align-items: center;
  justify-content: space-between;
  padding: 2px 12px 0 8px;
  color: #71717a;
  font-weight: 500;
}
.chevron {
  width: 12px;
  height: 12px;
  margin-bottom: 2px;
  fill: none;
  stroke: #a1a1aa;
  stroke-width: 1.3;
  stroke-linecap: round;
}
.nav-item {
  height: 40px;
  display: flex;
  align-items: center;
  gap: 12px;
  padding: 0 8px;
  border-radius: 8px;
  color: #3f3f46;
  font-weight: 500;
}
.nav-item span { padding-top: 2px; }
.nav-item.active { background: #f4f4f5; color: #0891b2; }
.nav-item.active .icon { stroke: #1597b7; }

/* Card */
.page-title {
  margin: 0 0 32px;
  font-size: 30px;
  font-weight: 700;
  line-height: 36px;
  letter-spacing: -0.025em;
}
.card {
  border-radius: 12px;
  background: #fff;
  box-shadow: 0 0 0 1px #e7e7e9, 0 1px 2px 1px rgba(0, 0, 0, 0.04);
}
.card-header {
  height: 69px;
  display: flex;
  align-items: center;
  gap: 12px;
  padding: 0 31px 0 24px;
  border-bottom: 1px solid #e4e4e7;
}
.card-icon { align-self: flex-start; margin-top: 16px; }
.card-title { margin: 0; flex: 1; font-size: 16px; font-weight: 600; }
.picker { position: relative; width: 290px; }
.picker-select {
  display: block;
  width: 100%;
  height: 38px;
  padding: 2px 32px 0 12px;
  border: 1px solid #e0e0e3;
  border-radius: 8px;
  background: #fff;
  color: #a1a1aa;
  appearance: none;
}
.picker-arrow {
  position: absolute;
  top: 13px;
  right: 13px;
  width: 12px;
  height: 12px;
  fill: none;
  stroke: #6b7280;
  stroke-width: 1.8;
  pointer-events: none;
}
.card-body { padding: 24px; }

/* Map */
.map { position: relative; }
.map-canvas { display: block; width: 100%; aspect-ratio: 1576 / 498; overflow: hidden; }
.sea { fill: #d5e8eb; }
.land { fill: #fbf8f3; }
.lakes { fill: #cbe3e7; stroke: #bfdde2; stroke-width: 1; }
.inland-seas { fill: #d5e8eb; stroke: #c3dfe4; stroke-width: 3; }
.rivers { fill: none; stroke: #dfefef; stroke-width: 4; }
.borders { fill: none; stroke: #ecd5d7; stroke-width: 4; }
.labels text {
  fill: #6d7f97;
  stroke: #fbf8f3;
  stroke-width: 3px;
  stroke-linejoin: round;
  paint-order: stroke;
  font-size: 11px;
  font-weight: 600;
  text-anchor: middle;
}
.labels .lg { font-size: 12px; }
.clusters circle { fill: rgba(181, 226, 140, 0.6); }
.clusters circle + circle { fill: rgba(110, 204, 57, 0.6); }
.clusters .medium circle { fill: rgba(241, 211, 87, 0.6); }
.clusters .medium circle + circle { fill: rgba(240, 194, 12, 0.6); }
.clusters text { font-family: "Liberation Sans", Arial, sans-serif; font-size: 12px; text-anchor: middle; }

.map-zoom { position: absolute; top: 10px; left: 10px; display: flex; }
.map-button {
  width: 32px;
  height: 32px;
  display: grid;
  place-items: center;
  border: 1px solid #d1d1d8;
  background: #fff;
  box-shadow: 0 1px 2px rgba(0, 0, 0, 0.06);
}
.map-button svg { width: 12px; height: 12px; fill: none; stroke: #85858b; stroke-width: 1.5; }
.map-zoom .map-button:first-child { border-radius: 6px 0 0; }
.map-zoom .map-button:last-child { border-radius: 0 0 6px; }
.map-full { position: absolute; top: 52px; left: 10px; border-radius: 6px; }
.map-full svg { stroke: #3f3f46; stroke-width: 1; }
.attribution { position: absolute; right: -3px; bottom: 1px; width: 277px; height: 20px; }
```
